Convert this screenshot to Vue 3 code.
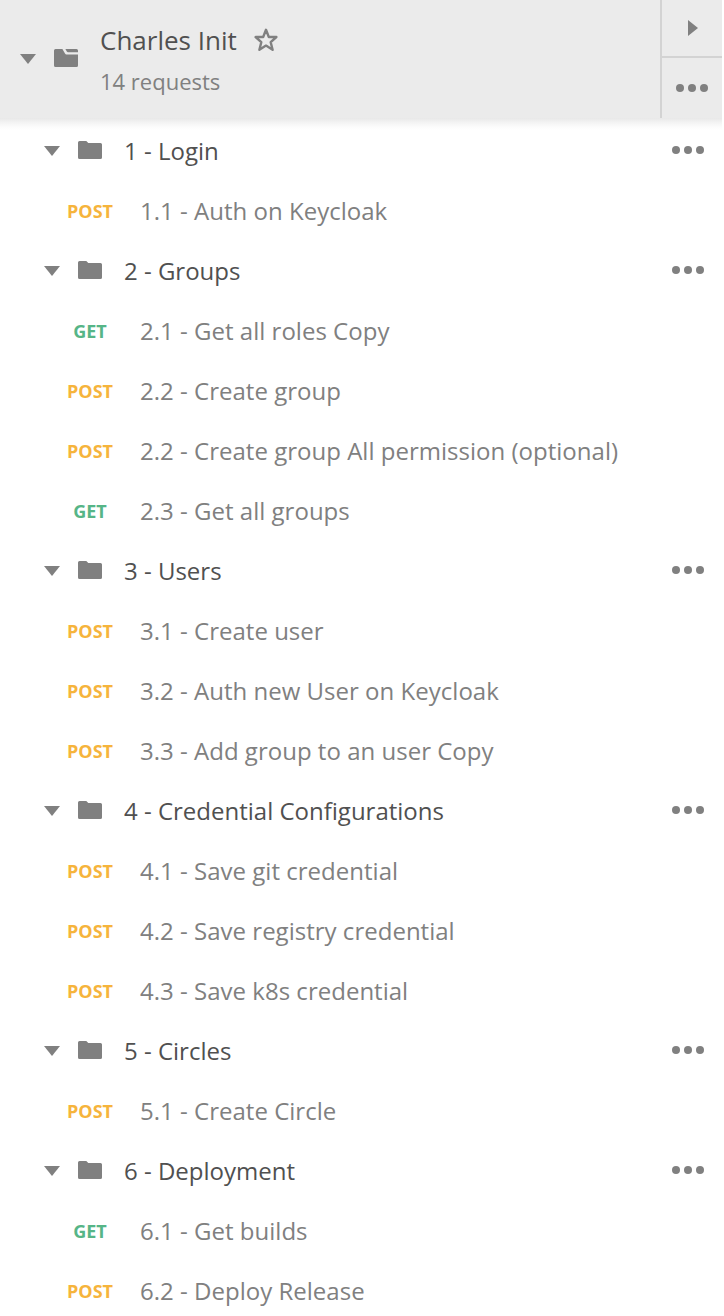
<script setup>
const groups = [
  { name: '1 - Login', requests: [['POST', '1.1 - Auth on Keycloak']] },
  {
    name: '2 - Groups',
    requests: [
      ['GET', '2.1 - Get all roles Copy'],
      ['POST', '2.2 - Create group'],
      ['POST', '2.2 - Create group All permission (optional)'],
      ['GET', '2.3 - Get all groups'],
    ],
  },
  {
    name: '3 - Users',
    requests: [
      ['POST', '3.1 - Create user'],
      ['POST', '3.2 - Auth new User on Keycloak'],
      ['POST', '3.3 - Add group to an user Copy'],
    ],
  },
  {
    name: '4 - Credential Configurations',
    requests: [
      ['POST', '4.1 - Save git credential'],
      ['POST', '4.2 - Save registry credential'],
      ['POST', '4.3 - Save k8s credential'],
    ],
  },
  { name: '5 - Circles', requests: [['POST', '5.1 - Create Circle']] },
  {
    name: '6 - Deployment',
    requests: [
      ['GET', '6.1 - Get builds'],
      ['POST', '6.2 - Deploy Release'],
    ],
  },
]
</script>

<template>
  <div class="panel">
    <header class="header">
      <svg class="caret" width="16" height="10" viewBox="0 0 16 10"><path d="M0 0H16L8 10Z" /></svg>
      <svg class="folder" width="24" height="18" viewBox="0 0 24 18">
        <path d="M1.5 0H8.400L11 4.500Q11.500 5.400 12.500 5.400H24V16.500Q24 18 22.500 18H1.500Q0 18 0 16.500V1.500Q0 0 1.500 0Z" />
        <path d="M11.400 0H22.500Q24 0 24 1.500V3.200H14Q13.200 3.200 12.800 2.500Z" />
      </svg>
      <div class="info">
        <div class="title">
          <span>Charles Init</span>
          <svg class="star" width="26" height="26" viewBox="0 0 26 26">
            <path d="M13 2.800L15.800 10H23.400L17.700 15.200L19.600 22.800L13 18.600L6.400 22.800L8.300 15.200L2.600 10H10.200Z" />
          </svg>
        </div>
        <div class="count">14 requests</div>
      </div>
      <div class="actions">
        <button class="action play" aria-label="Open">
          <svg width="10" height="16" viewBox="0 0 10 16"><path d="M0 0L10 8L0 16Z" /></svg>
        </button>
        <button class="action more" aria-label="More">
          <svg width="32" height="8" viewBox="0 0 32 8"><circle cx="4" cy="4" r="4" /><circle cx="16" cy="4" r="4" /><circle cx="28" cy="4" r="4" /></svg>
        </button>
      </div>
    </header>
    <main class="list">
      <section v-for="group in groups" :key="group.name">
        <div class="row group">
          <svg class="caret" width="16" height="10" viewBox="0 0 16 10"><path d="M0 0H16L8 10Z" /></svg>
          <svg class="folder" width="24" height="18" viewBox="0 0 24 18">
            <path d="M1.500 0H8.300L10.300 2H22.500Q24 2 24 3.500V16.500Q24 18 22.500 18H1.500Q0 18 0 16.500V1.500Q0 0 1.500 0Z" />
          </svg>
          <span class="name">{{ group.name }}</span>
          <svg class="dots" width="32" height="8" viewBox="0 0 32 8"><circle cx="4" cy="4" r="4" /><circle cx="16" cy="4" r="4" /><circle cx="28" cy="4" r="4" /></svg>
        </div>
        <div v-for="[method, label] in group.requests" :key="label" class="row request">
          <span class="method" :class="method.toLowerCase()">{{ method }}</span>
          <span class="label">{{ label }}</span>
        </div>
      </section>
    </main>
  </div>
</template>

<style>
body {
  background: #fff;
}
</style>

<style scoped>
.panel {
  width: 722px;
  height: 1316px;
  overflow: hidden;
  font-family: 'Open Sans', 'Noto Sans', sans-serif;
  font-size: 24px;
  color: #808080;
}
svg {
  display: block;
  flex: none;
  fill: #808080;
}
.header {
  position: relative;
  display: flex;
  height: 118px;
  background: #ebebeb;
}
.header::after {
  content: '';
  position: absolute;
  top: 100%;
  left: 0;
  right: 0;
  height: 12px;
  background: linear-gradient(#e8e8e8, #f4f4f4 40%, #fcfcfc 75%, #fff);
}
.header .caret {
  margin: 54px 0 0 20px;
}
.header .folder {
  margin: 49px 0 0 18px;
}
.info {
  flex: 1;
  margin-left: 22px;
}
.title {
  display: flex;
  height: 41px;
  padding-top: 20px;
  line-height: 40px;
  font-size: 26px;
  color: #505050;
}
.star {
  margin: 7px 0 0 16px;
  fill: none;
  stroke: #808080;
  stroke-width: 2.4;
  stroke-linejoin: round;
}
.count {
  line-height: 40px;
  font-size: 22px;
}
.actions {
  display: flex;
  flex-direction: column;
  width: 60px;
  border-left: 2px solid #d3d3d3;
}
.action {
  display: flex;
  align-items: center;
  justify-content: center;
  padding: 0;
  border: 0;
  background: none;
}
.play {
  box-sizing: border-box;
  height: 58px;
  padding-left: 2px;
  border-bottom: 2px solid #d3d3d3;
}
.more {
  flex: 1;
}
.list {
  padding-top: 3px;
}
.row {
  display: flex;
  align-items: center;
  height: 60px;
  line-height: 60px;
  white-space: nowrap;
}
.group {
  padding: 0 18px 0 44px;
  color: #505050;
}
.group .folder {
  margin: 0 22px 2px 18px;
}
.name {
  flex: 1;
}
.label {
  letter-spacing: 0.015px;
}
.dots {
  margin-bottom: 2px;
}
.method {
  width: 100px;
  margin-left: 40px;
  text-align: center;
  font-size: 18px;
  font-weight: 700;
}
.post {
  color: #f6b43c;
}
.get {
  color: #56b587;
}
</style>
